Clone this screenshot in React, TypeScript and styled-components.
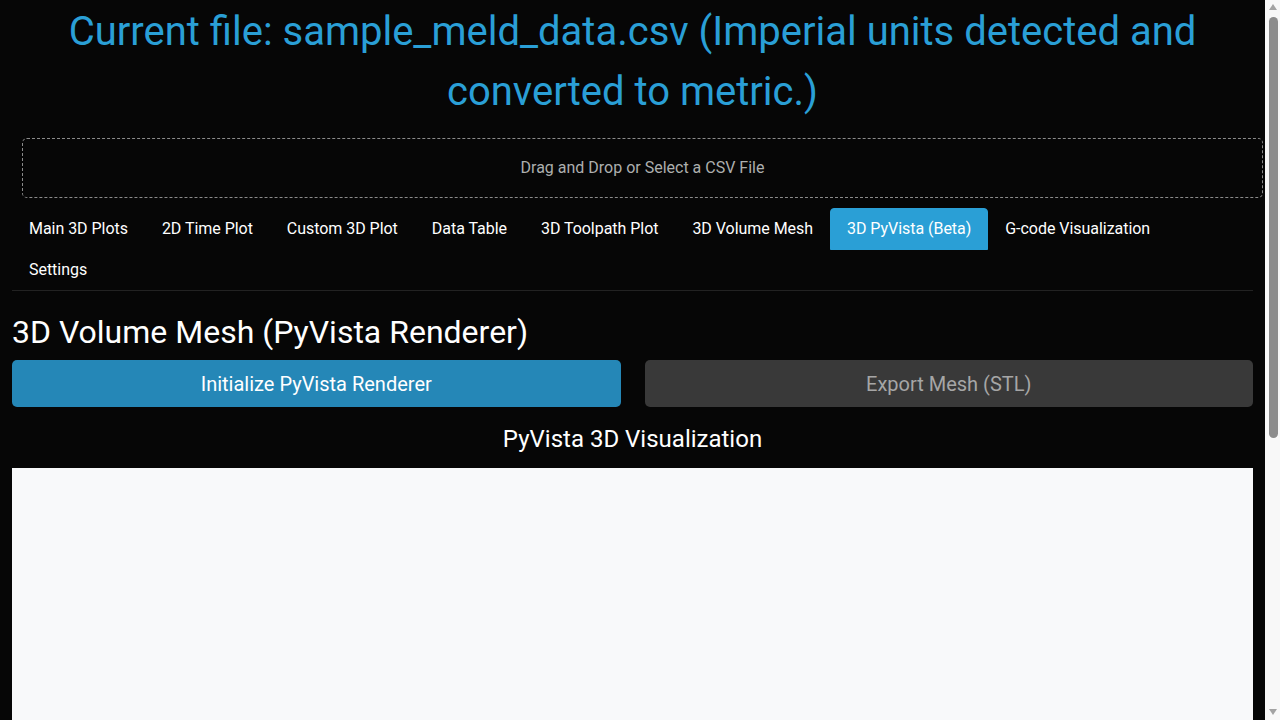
import React from "react";
import styled, { createGlobalStyle } from "styled-components";

const Global = createGlobalStyle`
  html, body { margin: 0; padding: 0; background: #060606; }
  body { font-family: Roboto, "Liberation Sans", sans-serif; color: #adafae; font-size: 16px; line-height: 1.5; }
  * { box-sizing: border-box; }
`;

const Page = styled.div`
  margin-right: 15px;
  padding: 0 12px 20px 12px;
  overflow-x: hidden;
`;

const Title = styled.h1`
  margin: 0;
  padding: 2px 0 6px 0;
  font-size: 40px;
  line-height: 60px;
  font-weight: 400;
  color: #2a9fd6;
  text-align: center;
`;

const DropZone = styled.div`
  width: 100%;
  height: 60px;
  line-height: 58px;
  border: 1px dashed #8a8a8a;
  border-radius: 5px;
  text-align: center;
  margin: 10px 0 10px 10px;
  color: #adafae;
  font-size: 16px;
`;

const Tabs = styled.ul`
  display: flex;
  flex-wrap: wrap;
  list-style: none;
  margin: 0;
  padding: 0;
  border-bottom: 1px solid #222;
`;

const Tab = styled.li<{ $active?: boolean }>`
  margin-bottom: -1px;
  padding: 8px 16px;
  line-height: 24px;
  font-size: 16px;
  letter-spacing: -0.04px;
  color: #fff;
  border: 1px solid ${(p) => (p.$active ? "#2a9fd6" : "transparent")};
  border-radius: 4px 4px 0 0;
  background: ${(p) => (p.$active ? "#2a9fd6" : "transparent")};
  cursor: pointer;
`;

const Section = styled.div`
  padding-top: 22px;
`;

const Heading = styled.h2`
  margin: 0 0 9px 0;
  font-size: 32px;
  line-height: 38px;
  font-weight: 400;
  color: #fff;
`;

const ButtonRow = styled.div`
  display: grid;
  grid-template-columns: 1fr 1fr;
  column-gap: 24px;
`;

const Button = styled.button<{ $variant: "primary" | "disabled" }>`
  height: 47px;
  border: none;
  border-radius: 5px;
  font-family: Roboto, "Liberation Sans", sans-serif;
  font-size: 20px;
  line-height: 30px;
  background: ${(p) => (p.$variant === "primary" ? "#2587b7" : "#393939")};
  color: ${(p) => (p.$variant === "primary" ? "#fff" : "#a6a6a6")};
`;

const SubHeading = styled.h4`
  margin: 18px 0 15px 0;
  font-size: 24px;
  line-height: 28px;
  font-weight: 400;
  color: #fff;
  text-align: center;
`;

const Canvas = styled.div`
  height: 690px;
  background: #f8f9fa;
`;

const ScrollTrack = styled.div`
  position: fixed;
  top: 0;
  right: 0;
  bottom: 0;
  width: 15px;
  background: #f8f8f8;
  display: flex;
  flex-direction: column;
  align-items: center;
  padding: 4px 0 5px 1px;
`;

const Arrow = styled.div<{ $down?: boolean }>`
  width: 0;
  height: 0;
  border-left: 4.5px solid transparent;
  border-right: 4.5px solid transparent;
  ${(p) =>
    p.$down
      ? "border-top: 6px solid #a3a3a3; margin-top: auto;"
      : "border-bottom: 6px solid #a3a3a3;"}
`;

const Thumb = styled.div`
  width: 9px;
  height: 421px;
  margin-top: 7px;
  border-radius: 5px;
  background: #8c8c8c;
`;

const tabs = [
  "Main 3D Plots",
  "2D Time Plot",
  "Custom 3D Plot",
  "Data Table",
  "3D Toolpath Plot",
  "3D Volume Mesh",
  "3D PyVista (Beta)",
  "G-code Visualization",
  "Settings",
];

export default function App() {
  return (
    <>
      <Global />
      <Page>
        <Title>Current file: sample_meld_data.csv (Imperial units detected and converted to metric.)</Title>
        <DropZone>Drag and Drop or Select a CSV File</DropZone>
        <Tabs>
          {tabs.map((t) => (
            <Tab key={t} $active={t === "3D PyVista (Beta)"}>{t}</Tab>
          ))}
        </Tabs>
        <Section>
          <Heading>3D Volume Mesh (PyVista Renderer)</Heading>
          <ButtonRow>
            <Button $variant="primary">Initialize PyVista Renderer</Button>
            <Button $variant="disabled" disabled>Export Mesh (STL)</Button>
          </ButtonRow>
          <SubHeading>PyVista 3D Visualization</SubHeading>
          <Canvas />
        </Section>
      </Page>
      <ScrollTrack aria-hidden>
        <Arrow />
        <Thumb />
        <Arrow $down />
      </ScrollTrack>
    </>
  );
}
